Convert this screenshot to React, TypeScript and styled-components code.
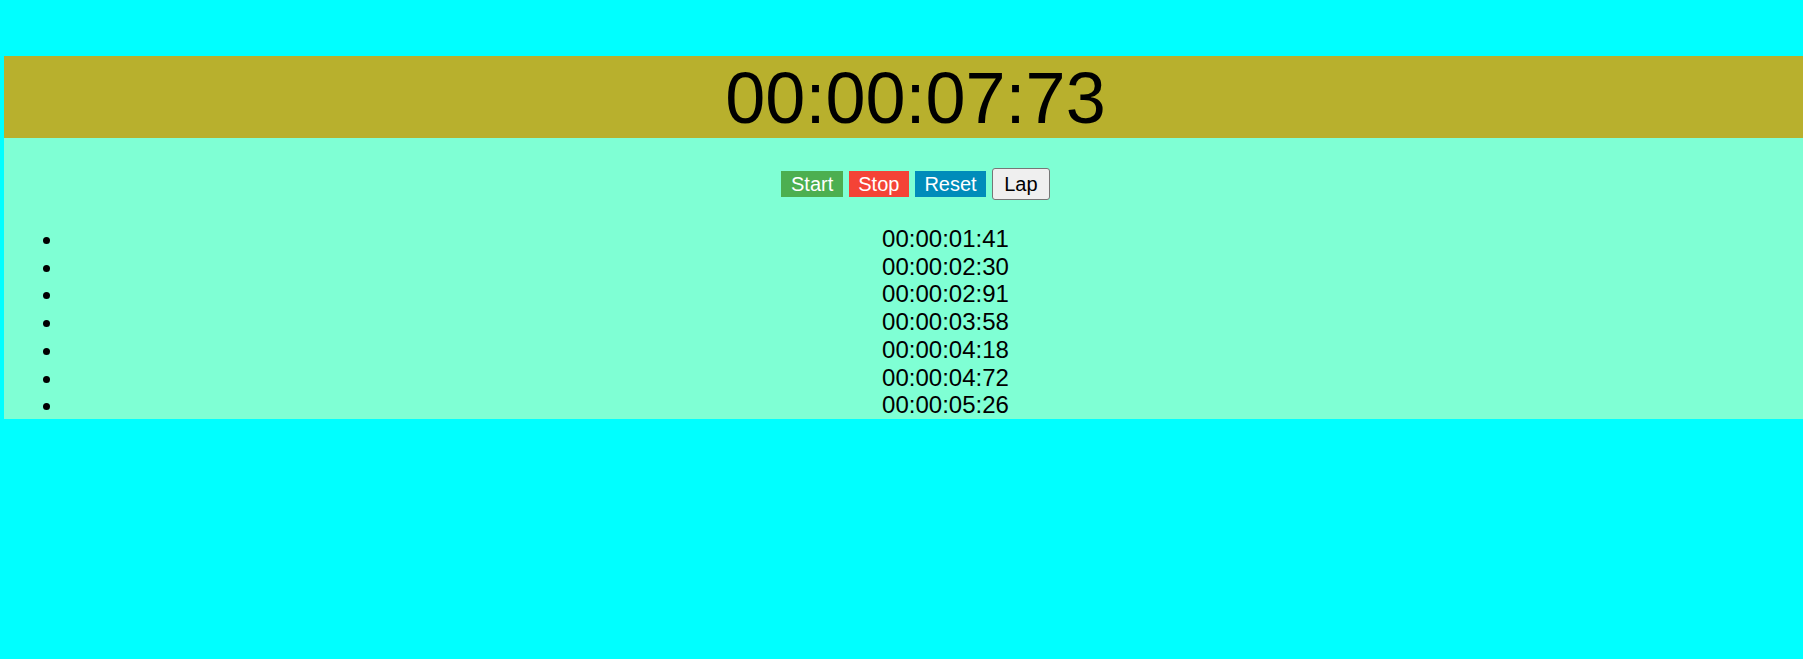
import React from "react";
import styled, { createGlobalStyle } from "styled-components";

const GlobalStyle = createGlobalStyle`
  html, body {
    margin: 0;
    padding: 0;
    background: #00ffff;
    overflow-x: hidden;
  }
  body {
    font-family: "Liberation Sans", Arial, sans-serif;
    color: #000;
  }
`;

const Page = styled.div`
  padding-top: 56px;
  padding-left: 4px;
`;

const Watch = styled.div`
  width: 1823px;
  background: #7fffd4;
  display: flex;
  flex-direction: column;
`;

const Display = styled.h1`
  box-sizing: border-box;
  margin: 0;
  height: 82px;
  padding-top: 2px;
  background: #b8b02d;
  font-size: 72px;
  font-weight: 400;
  line-height: 80px;
  text-align: center;
`;

const Controls = styled.div`
  margin-top: 30px;
  display: flex;
  justify-content: center;
  align-items: center;
  gap: 6px;
`;

const ActionButton = styled.button<{ $bg: string }>`
  font-family: "Liberation Sans", Arial, sans-serif;
  font-size: 20px;
  line-height: 23px;
  padding: 2px 9.5px 1px;
  border: none;
  border-radius: 0;
  background: ${(p) => p.$bg};
  color: #fff;
  cursor: pointer;
`;

const LapButton = styled.button`
  font-family: "Liberation Sans", Arial, sans-serif;
  font-size: 20px;
  line-height: 23px;
  padding: 4px 11px 3px;
  border: 1px solid #767676;
  border-radius: 3px;
  background: #efefef;
  color: #000;
  cursor: pointer;
`;

const Laps = styled.ul`
  margin: 25px 0 0;
  padding: 0 0 0 60px;
  list-style: disc outside;
`;

const LapItem = styled.li`
  font-size: 24px;
  line-height: 27.7px;
  text-align: center;
`;

const laps = [
  "00:00:01:41",
  "00:00:02:30",
  "00:00:02:91",
  "00:00:03:58",
  "00:00:04:18",
  "00:00:04:72",
  "00:00:05:26",
];

export default function App() {
  return (
    <>
      <GlobalStyle />
      <Page>
        <Watch>
          <Display>00:00:07:73</Display>
          <Controls>
            <ActionButton $bg="#4caf50">Start</ActionButton>
            <ActionButton $bg="#f44336">Stop</ActionButton>
            <ActionButton $bg="#008cba">Reset</ActionButton>
            <LapButton>Lap</LapButton>
          </Controls>
          <Laps>
            {laps.map((t) => (
              <LapItem key={t}>{t}</LapItem>
            ))}
          </Laps>
        </Watch>
      </Page>
    </>
  );
}
